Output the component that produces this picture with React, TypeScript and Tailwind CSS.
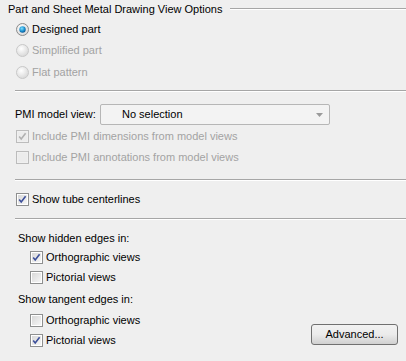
import React from "react";

const font = { fontFamily: '"Liberation Sans", Arial, sans-serif' };

function Radio({ checked, disabled }: { checked?: boolean; disabled?: boolean }) {
  return (
    <svg width="13" height="13" viewBox="0 0 13 13" className="shrink-0">
      <defs>
        <radialGradient id="rg1" cx="0.4" cy="0.35" r="0.7">
          <stop offset="0" stopColor="#ffffff" />
          <stop offset="1" stopColor={disabled ? "#e2e2e2" : "#d6d6d6"} />
        </radialGradient>
        <radialGradient id="rg2" cx="0.4" cy="0.35" r="0.7">
          <stop offset="0" stopColor="#7fe0ff" />
          <stop offset="0.6" stopColor="#1a8fcf" />
          <stop offset="1" stopColor="#0a4f8a" />
        </radialGradient>
      </defs>
      <circle cx="6.5" cy="6.5" r="6" fill="url(#rg1)" stroke={disabled ? "#c8c8c8" : "#8a8a8a"} strokeWidth="1" />
      {checked && <circle cx="6.5" cy="6.5" r="3.2" fill="url(#rg2)" />}
    </svg>
  );
}

function Check({ checked, disabled }: { checked?: boolean; disabled?: boolean }) {
  return (
    <svg width="13" height="13" viewBox="0 0 13 13" className="shrink-0">
      <defs>
        <linearGradient id="cg" x1="0" y1="0" x2="1" y2="1">
          <stop offset="0" stopColor="#d8d8d8" />
          <stop offset="1" stopColor="#f6f6f6" />
        </linearGradient>
      </defs>
      <rect x="0.5" y="0.5" width="12" height="12" fill={disabled ? "#f0f0f0" : "#ffffff"} stroke={disabled ? "#bcbcbc" : "#8e8f8f"} />
      <rect x="2" y="2" width="9" height="9" fill={disabled ? "#ececec" : "url(#cg)"} />
      {checked && (
        <path
          d="M3.2 6.6 L5.2 9 L9.6 3.2"
          fill="none"
          stroke={disabled ? "#b0b0b0" : "#3c4f9a"}
          strokeWidth="1.6"
          strokeLinejoin="miter"
        />
      )}
    </svg>
  );
}

function Sep({ indent }: { indent: string }) {
  return (
    <div className={`${indent} h-[2px] border-t border-[#a6a6a6] border-b border-b-white`} />
  );
}

export default function App() {
  return (
    <div className="w-[406px] h-[361px] bg-[#efefef] text-[11px] text-[#000] overflow-hidden whitespace-nowrap" style={font}>
      <div className="flex items-center h-[18px] pl-[8px]">
        <span className="leading-none">Part and Sheet Metal Drawing View Options</span>
        <div className="flex-1 ml-[8px] h-[2px] border-t border-[#a6a6a6] border-b border-b-white" />
      </div>
      <div className="flex flex-col pl-[16px]">
        <div className="flex items-center h-[22px] gap-[3px]">
          <Radio checked />
          <span>Designed part</span>
        </div>
        <div className="flex items-center h-[21px] gap-[3px] text-[#a3a3a3]">
          <Radio disabled />
          <span>Simplified part</span>
        </div>
        <div className="flex items-center h-[22px] gap-[3px] text-[#a3a3a3]">
          <Radio disabled />
          <span>Flat pattern</span>
        </div>
      </div>
      <div className="mt-[7px]">
        <Sep indent="ml-[15px]" />
      </div>
      <div className="flex items-center pl-[15px] mt-[12px] h-[21px]">
        <span className="w-[85px]">PMI model view:</span>
        <div className="w-[230px] h-[21px] border border-[#b6b6b6] rounded-[2px] bg-[#f3f3f3] flex items-center pl-[21px] pr-[6px]">
          <span className="flex-1">No selection</span>
          <svg width="7" height="4" viewBox="0 0 7 4">
            <path d="M0 0 H7 L3.5 4 Z" fill="#9a9a9a" />
          </svg>
        </div>
      </div>
      <div className="flex flex-col pl-[16px] mt-[1px] text-[#a3a3a3]">
        <div className="flex items-center h-[21px] gap-[3px]">
          <Check checked disabled />
          <span>Include PMI dimensions from model views</span>
        </div>
        <div className="flex items-center h-[21px] gap-[3px]">
          <Check disabled />
          <span>Include PMI annotations from model views</span>
        </div>
      </div>
      <div className="mt-[11px]">
        <Sep indent="ml-[15px]" />
      </div>
      <div className="flex items-center pl-[16px] mt-[8px] h-[21px] gap-[3px]">
        <Check checked />
        <span>Show tube centerlines</span>
      </div>
      <div className="mt-[8px]">
        <Sep indent="ml-[15px]" />
      </div>
      <div className="pl-[18px] mt-[9px] h-[18px] flex items-center">Show hidden edges in:</div>
      <div className="flex flex-col pl-[30px]">
        <div className="flex items-center h-[20px] gap-[3px]">
          <Check checked />
          <span>Orthographic views</span>
        </div>
        <div className="flex items-center h-[21px] gap-[3px]">
          <Check />
          <span>Pictorial views</span>
        </div>
      </div>
      <div className="pl-[18px] h-[22px] flex items-center">Show tangent edges in:</div>
      <div className="flex items-end pr-[8px]">
        <div className="flex flex-col pl-[30px] flex-1">
          <div className="flex items-center h-[20px] gap-[3px]">
            <Check />
            <span>Orthographic views</span>
          </div>
          <div className="flex items-center h-[21px] gap-[3px]">
            <Check checked />
            <span>Pictorial views</span>
          </div>
        </div>
        <button className="w-[87px] h-[21px] mb-[6px] border border-[#707070] rounded-[3px] bg-gradient-to-b from-[#f2f2f2] via-[#ebebeb] to-[#d0d0d0] text-[11px] leading-none flex items-center justify-center">
          Advanced...
        </button>
      </div>
    </div>
  );
}
